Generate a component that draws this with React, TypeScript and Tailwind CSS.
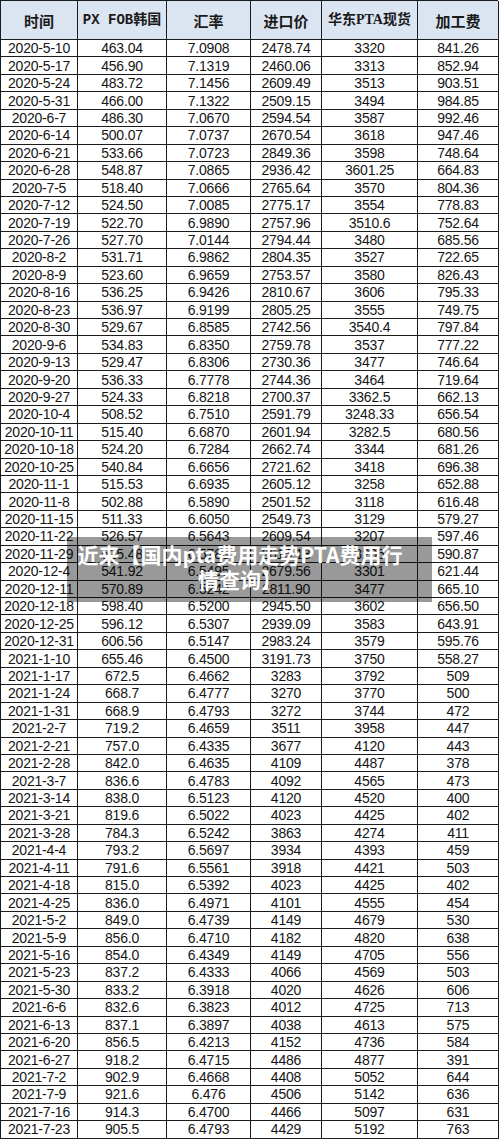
import React from "react";

const rows: string[][] = [
  ["2020-5-10", "463.04", "7.0908", "2478.74", "3320", "841.26"],
  ["2020-5-17", "456.90", "7.1319", "2460.06", "3313", "852.94"],
  ["2020-5-24", "483.72", "7.1456", "2609.49", "3513", "903.51"],
  ["2020-5-31", "466.00", "7.1322", "2509.15", "3494", "984.85"],
  ["2020-6-7", "486.30", "7.0670", "2594.54", "3587", "992.46"],
  ["2020-6-14", "500.07", "7.0737", "2670.54", "3618", "947.46"],
  ["2020-6-21", "533.66", "7.0723", "2849.36", "3598", "748.64"],
  ["2020-6-28", "548.87", "7.0865", "2936.42", "3601.25", "664.83"],
  ["2020-7-5", "518.40", "7.0666", "2765.64", "3570", "804.36"],
  ["2020-7-12", "524.50", "7.0085", "2775.17", "3554", "778.83"],
  ["2020-7-19", "522.70", "6.9890", "2757.96", "3510.6", "752.64"],
  ["2020-7-26", "527.70", "7.0144", "2794.44", "3480", "685.56"],
  ["2020-8-2", "531.71", "6.9862", "2804.35", "3527", "722.65"],
  ["2020-8-9", "523.60", "6.9659", "2753.57", "3580", "826.43"],
  ["2020-8-16", "536.25", "6.9426", "2810.67", "3606", "795.33"],
  ["2020-8-23", "536.97", "6.9199", "2805.25", "3555", "749.75"],
  ["2020-8-30", "529.67", "6.8585", "2742.56", "3540.4", "797.84"],
  ["2020-9-6", "534.83", "6.8350", "2759.78", "3537", "777.22"],
  ["2020-9-13", "529.47", "6.8306", "2730.36", "3477", "746.64"],
  ["2020-9-20", "536.33", "6.7778", "2744.36", "3464", "719.64"],
  ["2020-9-27", "524.33", "6.8218", "2700.37", "3362.5", "662.13"],
  ["2020-10-4", "508.52", "6.7510", "2591.79", "3248.33", "656.54"],
  ["2020-10-11", "515.40", "6.6870", "2601.94", "3282.5", "680.56"],
  ["2020-10-18", "524.20", "6.7284", "2662.74", "3344", "681.26"],
  ["2020-10-25", "540.84", "6.6656", "2721.62", "3418", "696.38"],
  ["2020-11-1", "515.53", "6.6935", "2605.12", "3258", "652.88"],
  ["2020-11-8", "502.88", "6.5890", "2501.52", "3118", "616.48"],
  ["2020-11-15", "511.33", "6.6050", "2549.73", "3129", "579.27"],
  ["2020-11-22", "526.57", "6.5643", "2609.54", "3207", "597.46"],
  ["2020-11-29", "525.48", "6.5788", "2615.13", "3206", "590.87"],
  ["2020-12-4", "541.92", "6.5495", "2679.56", "3301", "621.44"],
  ["2020-12-11", "570.89", "6.5242", "2811.90", "3477", "665.10"],
  ["2020-12-18", "598.40", "6.5200", "2945.50", "3602", "656.50"],
  ["2020-12-25", "596.12", "6.5307", "2939.09", "3583", "643.91"],
  ["2020-12-31", "606.56", "6.5147", "2983.24", "3579", "595.76"],
  ["2021-1-10", "655.46", "6.4500", "3191.73", "3750", "558.27"],
  ["2021-1-17", "672.5", "6.4662", "3283", "3792", "509"],
  ["2021-1-24", "668.7", "6.4777", "3270", "3770", "500"],
  ["2021-1-31", "668.9", "6.4793", "3272", "3744", "472"],
  ["2021-2-7", "719.2", "6.4659", "3511", "3958", "447"],
  ["2021-2-21", "757.0", "6.4335", "3677", "4120", "443"],
  ["2021-2-28", "842.0", "6.4635", "4109", "4487", "378"],
  ["2021-3-7", "836.6", "6.4783", "4092", "4565", "473"],
  ["2021-3-14", "838.0", "6.5123", "4120", "4520", "400"],
  ["2021-3-21", "819.6", "6.5022", "4023", "4425", "402"],
  ["2021-3-28", "784.3", "6.5242", "3863", "4274", "411"],
  ["2021-4-4", "793.2", "6.5697", "3934", "4393", "459"],
  ["2021-4-11", "791.6", "6.5561", "3918", "4421", "503"],
  ["2021-4-18", "815.0", "6.5392", "4023", "4425", "402"],
  ["2021-4-25", "836.0", "6.4971", "4101", "4555", "454"],
  ["2021-5-2", "849.0", "6.4739", "4149", "4679", "530"],
  ["2021-5-9", "856.0", "6.4710", "4182", "4820", "638"],
  ["2021-5-16", "854.0", "6.4349", "4149", "4705", "556"],
  ["2021-5-23", "837.2", "6.4333", "4066", "4569", "503"],
  ["2021-5-30", "833.2", "6.3918", "4020", "4626", "606"],
  ["2021-6-6", "832.6", "6.3823", "4012", "4725", "713"],
  ["2021-6-13", "837.1", "6.3897", "4038", "4613", "575"],
  ["2021-6-20", "856.5", "6.4213", "4152", "4736", "584"],
  ["2021-6-27", "918.2", "6.4715", "4486", "4877", "391"],
  ["2021-7-2", "902.9", "6.4668", "4408", "5052", "644"],
  ["2021-7-9", "921.6", "6.476", "4506", "5142", "636"],
  ["2021-7-16", "914.3", "6.4700", "4466", "5097", "631"],
  ["2021-7-23", "905.5", "6.4793", "4429", "5192", "763"],
];

const headBase =
  "h-[39px] flex items-center justify-center bg-[#dbe5f1] border-r border-b border-[#1c1c1c] font-bold text-[#1a1a1a] leading-none";
const cjk = "font-[family-name:'Noto_Sans_CJK_SC',sans-serif] text-[15px]";

export default function App() {
  return (
    <div className="relative w-[500px] h-[1139px] bg-white overflow-hidden">
      <div className="grid grid-cols-[77px_89px_84px_71px_96px_81px] w-[498px] border-l border-t border-[#1c1c1c] font-[family-name:'Liberation_Sans',Arial,sans-serif]">
        <div className={headBase + " " + cjk}>时间</div>
        <div className={headBase + " text-[14px] font-[family-name:'Liberation_Mono','Noto_Sans_CJK_SC',monospace]"}>PX FOB韩国</div>
        <div className={headBase + " " + cjk}>汇率</div>
        <div className={headBase + " " + cjk}>进口价</div>
        <div className={headBase + " text-[14px] font-[family-name:'Liberation_Serif','Noto_Sans_CJK_SC',serif]"}>华东PTA现货</div>
        <div className={headBase + " " + cjk}>加工费</div>
        {rows.map((r, i) =>
          r.map((c, j) => (
            <div
              key={i + "-" + j}
              className="h-[17.44px] flex items-center justify-center border-r border-b border-[#1c1c1c] text-[14px] leading-none tracking-[-0.2px] text-[#151515] whitespace-nowrap"
            >
              <span className="inline-block scale-y-[1.07]">{c}</span>
            </div>
          ))
        )}
      </div>
      <div className="absolute left-[67px] top-[537px] w-[365px] h-[65px] bg-black/40 pl-[8px] pr-[27px] pt-[5px] text-center text-white font-bold text-[21px] leading-[25px] font-[family-name:'Noto_Sans_CJK_SC','Liberation_Sans',sans-serif]">
        <div className="whitespace-nowrap">近来【国内pta费用走势PTA费用行</div>
        <div className="whitespace-nowrap">情查询】</div>
      </div>
    </div>
  );
}
